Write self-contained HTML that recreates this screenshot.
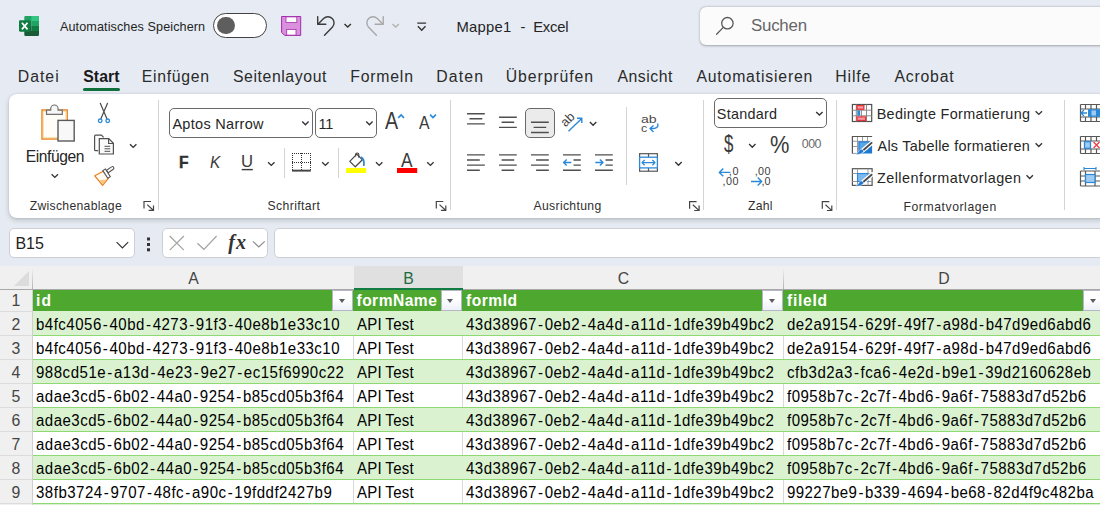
<!DOCTYPE html>
<html lang="de">
<head>
<meta charset="utf-8">
<title>Mappe1 - Excel</title>
<style>
html,body{margin:0;padding:0;}
body{width:1100px;height:505px;overflow:hidden;position:relative;background:#e6ebf3;font-family:"Liberation Sans",sans-serif;color:#242424;}
.abs{position:absolute;}
.t{position:absolute;white-space:nowrap;line-height:1;transform-origin:0 50%;}
#ico{position:absolute;left:0;top:0;overflow:hidden;}
#title{left:0;top:0;width:1100px;height:94px;background:linear-gradient(#e7ecf4,#e6eaf2);}
#search{left:699.5px;top:6.5px;width:420px;height:38.5px;background:#fbfbfc;border-radius:6px;box-shadow:0 0.5px 2.5px rgba(0,0,0,.30),0 0 1px rgba(0,0,0,.15);}
#toggle{left:213px;top:13px;width:54px;height:24.6px;border:1.2px solid #424242;border-radius:13px;background:#fff;box-sizing:border-box;}
#knob{left:217.2px;top:16.6px;width:17.6px;height:17.6px;border-radius:9px;background:#5e5e5e;}
#uline{left:83px;top:88px;width:37px;height:3px;border-radius:1.5px;background:#0f703b;}
#ribbon{left:9px;top:94px;width:1110px;height:124px;background:#fff;border-radius:8px;box-shadow:0 2px 5px rgba(0,0,0,.20),0 0 2px rgba(0,0,0,.10);}
.sep{position:absolute;width:1px;background:#d4d4d4;}
.combo{position:absolute;border:1px solid #6a6a6a;border-radius:5px;background:#fff;box-sizing:border-box;}
.fbox{position:absolute;background:#fff;border-radius:5px;border:1px solid #cdcfd4;box-sizing:border-box;}
#grid{left:0;top:266px;width:1100px;height:239px;background:#fff;}
#colhead{left:0;top:266px;width:1100px;height:23px;background:#f0f0f0;border-bottom:1px solid #a8a8a8;}
#rowhead{left:0;top:290px;width:32px;height:215px;background:#f0f0f0;border-right:1px solid #cfcfcf;}
.ch{position:absolute;top:266px;height:23px;line-height:26px;font-size:15.8px;color:#454545;text-align:center;}
.rh{position:absolute;left:0;width:32px;height:24px;line-height:24.6px;font-size:15.8px;color:#454545;text-align:center;}
.band{position:absolute;left:33px;width:1067px;}
.vl{position:absolute;width:1px;}
.fbtn{position:absolute;top:290px;width:21px;height:20.6px;background:linear-gradient(#fff 40%,#edf0f7);border:1px solid #b7b6c8;box-sizing:border-box;}
.fbtn:after{content:"";position:absolute;left:5.6px;top:8.1px;border-left:3.9px solid transparent;border-right:3.9px solid transparent;border-top:4.3px solid #5c5c5c;}
</style>
</head>
<body>
<div id="title" class="abs"></div>
<div id="toggle" class="abs"></div><div id="knob" class="abs"></div>
<div id="search" class="abs"></div>
<div id="uline" class="abs"></div>
<div id="ribbon" class="abs"></div>
<div class="sep" style="left:158px;top:100px;height:110px"></div>
<div class="sep" style="left:450px;top:100px;height:110px"></div>
<div class="sep" style="left:703px;top:100px;height:110px"></div>
<div class="sep" style="left:836px;top:100px;height:110px"></div>
<div class="sep" style="left:1064px;top:100px;height:110px"></div>
<div class="sep" style="left:284px;top:148px;height:30px"></div>
<div class="sep" style="left:338px;top:148px;height:30px"></div>
<div class="sep" style="left:626px;top:107px;height:78px"></div>
<div class="combo" style="left:169px;top:108px;width:144px;height:30px"></div>
<div class="combo" style="left:315px;top:108px;width:61.500px;height:30px"></div>
<div class="combo" style="left:714px;top:98px;width:113px;height:30px"></div>
<div class="combo" style="left:525px;top:108px;width:30px;height:30px;background:#ebebeb"></div>
<div class="fbox" style="left:9.200px;top:228px;width:126.300px;height:29.500px"></div>
<div class="fbox" style="left:161.500px;top:228px;width:106px;height:29.500px"></div>
<div class="fbox" style="left:273.500px;top:228px;width:840px;height:29.500px"></div>
<div id="grid" class="abs"></div>
<div id="colhead" class="abs"></div>
<div id="rowhead" class="abs"></div>
<div class="abs" style="left:353.5px;top:266px;width:109.5px;height:22px;background:#e0e0e0;border-bottom:2px solid #107c41"></div>
<div class="ch" style="left:33px;width:321px;color:#454545">A</div>
<div class="ch" style="left:354px;width:109px;color:#1e6c41">B</div>
<div class="ch" style="left:463px;width:321px;color:#454545">C</div>
<div class="ch" style="left:784px;width:320px;color:#454545">D</div>
<div class="vl" style="left:32px;top:267px;height:22px;background:linear-gradient(rgba(200,200,200,0) 5%,#b4b4b4)"></div>
<div class="vl" style="left:783px;top:267px;height:22px;background:linear-gradient(rgba(200,200,200,0) 5%,#b4b4b4)"></div>
<div class="band" style="top:290px;height:21px;background:#4ea72e"></div>
<div class="band" style="top:311px;height:25px;background:#daf2d0;border-bottom:1px solid #8ed973;box-sizing:border-box"></div>
<div class="band" style="top:336px;height:24px;background:#fff;border-bottom:1px solid #8ed973;box-sizing:border-box"></div>
<div class="band" style="top:360px;height:24px;background:#daf2d0;border-bottom:1px solid #8ed973;box-sizing:border-box"></div>
<div class="band" style="top:384px;height:24px;background:#fff;border-bottom:1px solid #8ed973;box-sizing:border-box"></div>
<div class="band" style="top:408px;height:24px;background:#daf2d0;border-bottom:1px solid #8ed973;box-sizing:border-box"></div>
<div class="band" style="top:432px;height:24px;background:#fff;border-bottom:1px solid #8ed973;box-sizing:border-box"></div>
<div class="band" style="top:456px;height:24px;background:#daf2d0;border-bottom:1px solid #8ed973;box-sizing:border-box"></div>
<div class="band" style="top:480px;height:24px;background:#fff;border-bottom:1px solid #8ed973;box-sizing:border-box"></div>
<div class="band" style="top:504px;height:2px;background:#daf2d0"></div>
<div class="vl" style="left:353px;top:336px;height:23px;background:#d9d9d9"></div>
<div class="vl" style="left:462px;top:336px;height:23px;background:#d9d9d9"></div>
<div class="vl" style="left:783px;top:336px;height:23px;background:#d9d9d9"></div>
<div class="vl" style="left:353px;top:384px;height:23px;background:#d9d9d9"></div>
<div class="vl" style="left:462px;top:384px;height:23px;background:#d9d9d9"></div>
<div class="vl" style="left:783px;top:384px;height:23px;background:#d9d9d9"></div>
<div class="vl" style="left:353px;top:432px;height:23px;background:#d9d9d9"></div>
<div class="vl" style="left:462px;top:432px;height:23px;background:#d9d9d9"></div>
<div class="vl" style="left:783px;top:432px;height:23px;background:#d9d9d9"></div>
<div class="vl" style="left:353px;top:480px;height:23px;background:#d9d9d9"></div>
<div class="vl" style="left:462px;top:480px;height:23px;background:#d9d9d9"></div>
<div class="vl" style="left:783px;top:480px;height:23px;background:#d9d9d9"></div>
<div class="rh" style="top:289px">1</div>
<div class="rh" style="top:313px">2</div>
<div class="abs" style="left:0;top:335px;width:32px;height:1px;background:#dcdcdc"></div>
<div class="rh" style="top:337px">3</div>
<div class="abs" style="left:0;top:359px;width:32px;height:1px;background:#dcdcdc"></div>
<div class="rh" style="top:361px">4</div>
<div class="abs" style="left:0;top:383px;width:32px;height:1px;background:#dcdcdc"></div>
<div class="rh" style="top:385px">5</div>
<div class="abs" style="left:0;top:407px;width:32px;height:1px;background:#dcdcdc"></div>
<div class="rh" style="top:409px">6</div>
<div class="abs" style="left:0;top:431px;width:32px;height:1px;background:#dcdcdc"></div>
<div class="rh" style="top:433px">7</div>
<div class="abs" style="left:0;top:455px;width:32px;height:1px;background:#dcdcdc"></div>
<div class="rh" style="top:457px">8</div>
<div class="abs" style="left:0;top:479px;width:32px;height:1px;background:#dcdcdc"></div>
<div class="rh" style="top:481px">9</div>
<div class="abs" style="left:0;top:503px;width:32px;height:1px;background:#dcdcdc"></div>
<div class="abs" style="left:0;top:311px;width:32px;height:1px;background:#dcdcdc"></div>
<div class="fbtn" style="left:332px"></div>
<div class="fbtn" style="left:440.5px"></div>
<div class="fbtn" style="left:762px"></div>
<div class="fbtn" style="left:1083px"></div>
<svg id="ico" width="1100" height="505" viewBox="0 0 1100 505" fill="none" stroke-linecap="butt">
<!-- excel logo -->
<g>
 <path d="M25.500 16h12.300a1.200 1.200 0 0 1 1.200 1.200V21H24.300v-3.800A1.200 1.200 0 0 1 25.500 16z" fill="#21a366"/>
 <rect x="31.600" y="16" width="7.400" height="5" fill="#33c481"/>
 <path d="M37.800 16a1.200 1.200 0 0 1 1.200 1.200V21h-7.400v-5z" fill="#33c481"/>
 <rect x="24.300" y="21" width="7.300" height="5" fill="#107c41"/>
 <rect x="31.600" y="21" width="7.400" height="5" fill="#21a366"/>
 <rect x="24.300" y="26" width="7.300" height="5" fill="#185c37"/>
 <rect x="31.600" y="26" width="7.400" height="5" fill="#107c41"/>
 <path d="M24.300 31H39v3.800a1.200 1.200 0 0 1-1.200 1.200H25.500a1.200 1.200 0 0 1-1.200-1.200z" fill="#185c37"/>
 <rect x="19" y="20.300" width="11.400" height="11.400" rx="1.100" fill="#107c41"/>
 <path d="M21.900 22.700l5.600 6.700M27.500 22.700l-5.600 6.700" stroke="#fff" stroke-width="1.700"/>
</g>
<!-- save -->
<path d="M281.600 16.500H300.700V35.400H284.600L281.600 32.400z" fill="#da90dc" stroke="#a32cae" stroke-width="1"/>
<rect x="286" y="16.900" width="10.800" height="5.700" fill="#fff" stroke="#a32cae" stroke-width="0.800"/>
<rect x="286.700" y="29.400" width="9.300" height="5.700" fill="#fff" stroke="#a32cae" stroke-width="0.800"/>
<!-- undo / redo -->
<g stroke="#3b3b3b" stroke-width="1.400" stroke-linecap="round" stroke-linejoin="round">
 <path d="M317.700 16.600V24.300H325.800"/>
 <path d="M318.200 23.900L323.600 18.600A6.100 6.100 0 0 1 332.300 27.200L324.500 35.300"/>
</g>
<g stroke="#a8a8a8" stroke-width="1.400" stroke-linecap="round" stroke-linejoin="round">
 <path d="M383.200 16.600V24.300H375.100"/>
 <path d="M382.700 23.900L377.300 18.600A6.100 6.100 0 0 0 368.600 27.200L376.400 35.300"/>
</g>
<path d="M0.3 0.4l3.2 3.2 3.2-3.200" transform="translate(344.200 23.500)" stroke-width="1.35" fill="none" stroke="#333"/>
<path d="M0.3 0.4l3.2 3.2 3.2-3.200" transform="translate(392.200 23.500)" stroke-width="1.35" fill="none" stroke="#b4b4b4"/>
<path d="M417.300 23.100H426.100M417.900 26.300l3.800 3.900 3.800-3.900" stroke="#333" stroke-width="1.400"/>
<!-- search -->
<g stroke="#5a5a5a" stroke-width="1.300"><circle cx="727.400" cy="23.200" r="5.700"/><path d="M723.300 27.400L716.600 34.300" stroke-linecap="round"/></g>

<!-- paste clipboard -->
<rect x="42" y="110" width="25.200" height="29" fill="#fffdf8" stroke="#e8862a" stroke-width="1.500"/>
<rect x="43.300" y="111.300" width="22.600" height="26.400" fill="none" stroke="#fbdc9b" stroke-width="1"/>
<path d="M46.500 114.300V110.100H50.700V108.700A3.700 3.700 0 0 1 58.100 108.700V110.100H62.300V114.300z" fill="#f6f6f6" stroke="#707070" stroke-width="1.200"/>
<rect x="58" y="120.400" width="16.200" height="20.600" fill="#f8f8f8" stroke="#5a5a5a" stroke-width="1.400"/>
<!-- scissors -->
<g stroke="#4a4a4a" stroke-width="1.200" stroke-linecap="round"><path d="M100.300 103.300L106.800 118.600M107.500 103.300L101 118.600"/></g>
<g stroke="#2b88d8" stroke-width="1.300" fill="#fff"><circle cx="100.200" cy="120.800" r="1.800"/><circle cx="107.700" cy="120.800" r="1.800"/></g>
<!-- copy -->
<g stroke="#505050" stroke-width="1.200" fill="none">
 <path d="M98.200 150.700H95.600Q94.600 150.700 94.600 149.700V136.200Q94.600 135.200 95.600 135.200H101.500L103.600 137.400"/>
 <path d="M99.300 138.700H108.800L113.400 143.300V154H99.300z" fill="#fafafa"/>
 <path d="M108.600 138.900V143.500H113.200"/>
 <path d="M104.500 146.300H110.200M104.500 148.800H110.200M104.500 151.300H110.200" stroke-width="1"/>
</g>
<path d="M0.3 0.4l3.2 3.2 3.2-3.200" transform="translate(129.700 143.800)" stroke-width="1.35" fill="none" stroke="#333"/>
<path d="M0.3 0.4l3.2 3.2 3.2-3.200" transform="translate(51.300 173.800)" stroke-width="1.35" fill="none" stroke="#333"/>
<!-- format painter -->
<path d="M94.800 175.800L103.700 171L108.300 178.300L102.600 185.300z" fill="#fffaf2" stroke="#e8811d" stroke-width="1.300" stroke-linejoin="round"/>
<path d="M99.500 180.300L102.800 184.500L106.800 179.500z" fill="#f9c57f" stroke="none"/>
<path d="M102.800 170.600L105.400 169L110.300 176.600L107.800 178.300z" fill="#fff" stroke="#555" stroke-width="1.100"/>
<path d="M106.600 170.300L111.600 166.900A1.300 1.300 0 0 1 113.300 169.200L108.300 172.800z" fill="#fff" stroke="#555" stroke-width="1.100"/>
<g transform="translate(144 201)" stroke="#444" stroke-width="1.2" fill="none"><path d="M0 7.5V0.5H7"/><path d="M3.2 3.6L9.3 9.2M9.5 4.400V9.3H4.6"/></g>
<g transform="translate(436.300 201)" stroke="#444" stroke-width="1.2" fill="none"><path d="M0 7.5V0.5H7"/><path d="M3.2 3.6L9.3 9.2M9.5 4.400V9.3H4.6"/></g>
<g transform="translate(689.600 201.200)" stroke="#444" stroke-width="1.2" fill="none"><path d="M0 7.5V0.5H7"/><path d="M3.2 3.6L9.3 9.2M9.5 4.400V9.3H4.6"/></g>
<g transform="translate(822.300 201.200)" stroke="#444" stroke-width="1.2" fill="none"><path d="M0 7.5V0.5H7"/><path d="M3.2 3.6L9.3 9.2M9.5 4.400V9.3H4.6"/></g>

<!-- font group -->
<path d="M0.3 0.4l3.2 3.2 3.2-3.200" transform="translate(301.900 121.200)" stroke-width="1.35" fill="none" stroke="#333"/>
<path d="M0.3 0.4l3.2 3.2 3.2-3.200" transform="translate(365.900 121.200)" stroke-width="1.35" fill="none" stroke="#333"/>
<path d="M398.200 117.900l2.900-3 2.900 3" stroke="#2b88d8" stroke-width="1.600"/>
<path d="M430.100 114.600l2.900 3 2.900-3" stroke="#2b88d8" stroke-width="1.600"/>
<rect x="241.700" y="168.900" width="11.100" height="1.400" fill="#3a3a3a"/>
<path d="M0.3 0.4l3.2 3.2 3.2-3.200" transform="translate(267.800 161.800)" stroke-width="1.35" fill="none" stroke="#333"/>
<!-- borders icon -->
<g stroke="#333" stroke-width="1" stroke-dasharray="1 1" shape-rendering="crispEdges">
 <path d="M292 153.500H311M292 162.500H311M292.500 153V170M301.500 153V170M310.500 153V170"/>
</g>
<rect x="292" y="169.700" width="18.800" height="1.900" fill="#444"/>
<path d="M0.3 0.4l3.2 3.2 3.2-3.200" transform="translate(321.900 161.800)" stroke-width="1.35" fill="none" stroke="#333"/>
<!-- fill bucket -->
<rect x="346" y="168" width="20.200" height="5" fill="#ffff00"/>
<path d="M349.800 161.300L356.800 154.200L362.400 159.800L355.300 166.800z" stroke="#444" stroke-width="1.200" stroke-linejoin="round" fill="#fff"/>
<path d="M355.600 156.500V154.600A1.600 1.600 0 0 1 358.800 154.600V157.800" stroke="#444" stroke-width="1.100"/>
<path d="M361.300 157.400C363.600 158.400 364.200 161.500 363.900 165.200" stroke="#2b88d8" stroke-width="1.800" stroke-linecap="round"/>
<path d="M0.3 0.4l3.2 3.2 3.2-3.200" transform="translate(375.700 161.800)" stroke-width="1.35" fill="none" stroke="#333"/>
<rect x="397" y="168" width="20.200" height="5" fill="#ff0000"/>
<path d="M0.3 0.4l3.2 3.2 3.2-3.200" transform="translate(426.900 161.800)" stroke-width="1.35" fill="none" stroke="#333"/>

<!-- alignment -->
<g stroke="#4f4f4f" stroke-width="1.400">
 <path d="M467 113.700H484.800M469.500 118.800H482.300M467 123.900H484.800"/>
 <path d="M499 117.200H516.800M501.600 122.300H514.200M499 127.400H516.800"/>
 <path d="M531 122.300H548.800M533.600 127.400H546.200M531 132.500H548.800"/>
 <path d="M467 154.900H484.800M467 160H479.800M467 165.100H484.800M467 170.200H479.800"/>
 <path d="M499 154.900H516.800M501.600 160H514.200M499 165.100H516.800M501.600 170.200H514.200"/>
 <path d="M531 154.900H548.800M536.100 160H548.800M531 165.100H548.800M536.100 170.200H548.800"/>
 <path d="M563 154.900H580.800M573.500 160H580.800M573.500 165.100H580.800M563 170.200H580.800"/>
 <path d="M595 154.900H612.800M605.500 160H612.800M605.500 165.100H612.800M595 170.200H612.800"/>
</g>
<g stroke="#2b88d8" stroke-width="1.400" stroke-linejoin="round">
 <path d="M563.600 162.500H571.300M566.700 159.400L563.600 162.500L566.700 165.600"/>
 <path d="M595.300 162.500H603M599.900 159.400L603 162.500L599.900 165.600"/>
 <path d="M568.500 131.300L581.700 118.400M577 118.300H581.800V122.900"/>
</g>
<path d="M0.3 0.4l3.2 3.2 3.2-3.200" transform="translate(589.600 121.700)" stroke-width="1.35" fill="none" stroke="#333"/>
<!-- wrap text arrow -->
<path d="M657.600 123.500C658.800 126.500 657.300 128.700 650.300 128.600M653.500 125.400L650 128.600L653.500 131.900" stroke="#2b88d8" stroke-width="1.400" stroke-linejoin="round"/>
<!-- merge -->
<g stroke="#585858" stroke-width="1.200"><rect x="639.600" y="153.700" width="17.800" height="17.500"/><path d="M648.500 153.700V157M648.500 168V171.200"/></g>
<rect x="639.600" y="157.200" width="17.800" height="10.700" fill="#fff" stroke="#2b88d8" stroke-width="1.300"/>
<path d="M642 162.600H655M644.600 160L642 162.600L644.600 165.200M652.400 160L655 162.600L652.400 165.200" stroke="#2b88d8" stroke-width="1.300" stroke-linejoin="round"/>
<path d="M0.3 0.4l3.2 3.2 3.2-3.200" transform="translate(675 161.700)" stroke-width="1.35" fill="none" stroke="#333"/>

<!-- number -->
<path d="M0.3 0.4l3.2 3.2 3.2-3.200" transform="translate(815.900 111.500)" stroke-width="1.35" fill="none" stroke="#333"/>
<path d="M0.3 0.4l3.2 3.2 3.2-3.200" transform="translate(748.800 143.600)" stroke-width="1.35" fill="none" stroke="#333"/>
<g stroke="#2b88d8" stroke-width="1.400" stroke-linejoin="round">
 <path d="M719.300 172.400H730.300M723.300 168.500L719.300 172.400L723.300 176.300"/>
 <path d="M751 181.500H761.700M757.700 177.600L761.700 181.500L757.700 185.400"/>
</g>

<!-- styles icons -->
<g>
 <rect x="852.400" y="104.500" width="19.300" height="17" fill="#fff" stroke="#505050" stroke-width="1.200"/>
 <path d="M856.300 104.500V121.500M861.400 104.500V121.500M866.500 104.500V121.500M852.400 110.200H871.600M852.400 115.800H871.600" stroke="#8a8a8a" stroke-width="1"/>
 <rect x="856.300" y="105" width="8.200" height="4.900" fill="#e8323c"/>
 <rect x="857.300" y="110.400" width="2.800" height="5.200" fill="#2b88d8"/>
 <rect x="856.300" y="116.300" width="10" height="4.700" fill="#e8323c"/>
 <rect x="857.600" y="106.200" width="5.600" height="2.400" fill="#f59aa0"/>
 <rect x="857.600" y="117.500" width="7.400" height="2.300" fill="#f59aa0"/>
</g>
<g>
 <path d="M857.500 136.500V153.500M862.500 136.500V141.500M867.500 136.500V141.500M852.400 141.300H871.500M852.400 146.500H858M852.400 153.400H858" stroke="#9a9a9a" stroke-width="1"/>
 <path d="M852.400 153.500V136.500H872.100" stroke="#555" stroke-width="1.200"/>
 <rect x="858.300" y="141.300" width="13.800" height="12.200" fill="#2079d0"/>
 <rect x="859.500" y="142.500" width="8.500" height="7.500" fill="#5aa5e6"/>
 <path d="M863.200 150.200L872 142.600" stroke="#fff" stroke-width="4.400" stroke-linecap="round"/>
 <path d="M863.800 149.700L871.600 142.900" stroke="#4a4a4a" stroke-width="1.900" stroke-linecap="round"/>
 <path d="M855.600 154.400C858.500 155 862.300 153.800 863.900 151C863.200 149 860.400 148.700 859.200 150.500C858.500 152.200 857.300 153.500 855.600 154.400z" fill="#2079d0" stroke="#fff" stroke-width="0.500"/>
</g>
<g>
 <rect x="852.400" y="168.700" width="19.700" height="16.700" fill="#fff" stroke="#555" stroke-width="1.200"/>
 <path d="M857.500 168.700V185.400M852.400 173.500H872M868 168.700V185.400M852.400 181.500H872" stroke="#9a9a9a" stroke-width="1"/>
 <rect x="857.500" y="173.500" width="10.500" height="8" fill="#7ab8ee" stroke="#2b88d8" stroke-width="1.100"/>
 <path d="M863.200 182L872 174.400" stroke="#fff" stroke-width="4.400" stroke-linecap="round"/>
 <path d="M863.800 181.500L871.600 174.700" stroke="#4a4a4a" stroke-width="1.900" stroke-linecap="round"/>
 <path d="M855.600 186.200C858.500 186.800 862.300 185.600 863.900 182.800C863.200 180.800 860.400 180.500 859.200 182.300C858.500 184 857.300 185.300 855.600 186.200z" fill="#2079d0" stroke="#fff" stroke-width="0.500"/>
</g>
<path d="M0.3 0.4l3.2 3.2 3.2-3.200" transform="translate(1035.300 110.800)" stroke-width="1.35" fill="none" stroke="#333"/>
<path d="M0.3 0.4l3.2 3.2 3.2-3.200" transform="translate(1035.300 142.900)" stroke-width="1.35" fill="none" stroke="#333"/>
<path d="M0.3 0.4l3.2 3.2 3.2-3.200" transform="translate(1026.200 174.900)" stroke-width="1.35" fill="none" stroke="#333"/>
<!-- cells icons (cut) -->
<g stroke="#585858" stroke-width="1.200">
 <path d="M1080.500 104.500H1100M1080.500 109H1100M1080.500 117H1100M1080.500 121.500H1100M1080.500 104.500V121.500M1085.500 104.500V109M1085.500 117V121.500M1091 104.500V121.500M1096.500 104.500V121.500"/>
 <path d="M1080.500 136.500H1100M1080.500 141H1100M1080.500 149H1100M1080.500 153.500H1100M1080.500 136.500V153.500M1085.500 136.500V141M1085.500 149V153.500M1091 136.500V141M1091 149V153.500M1096.500 136.500V141M1096.500 149V153.500"/>
 <path d="M1080.500 171H1100M1080.500 176H1100M1080.500 181H1100M1080.500 186H1100M1080.500 171V186M1085.500 171V186M1095 171V186"/>
</g>
<rect x="1088" y="109.200" width="12" height="7.600" fill="#2b88d8"/><rect x="1091.500" y="110.500" width="4.500" height="5" fill="#9fcbf0"/>
<path d="M1087 113H1081M1084 110L1081 113L1084 116" stroke="#2b88d8" stroke-width="1.300"/>
<rect x="1084.500" y="141.700" width="6" height="6.600" fill="#9fcbf0" stroke="#2b88d8" stroke-width="1.300"/>
<path d="M1093.500 142L1099.500 148M1099.500 142L1093.500 148" stroke="#ee3d46" stroke-width="1.300"/>
<rect x="1085.500" y="174.500" width="9.500" height="8" fill="#9fcbf0" stroke="#2b88d8" stroke-width="1.200"/>
<path d="M1084 168.500H1096M1084 167V170M1096 167V170" stroke="#2b88d8" stroke-width="1.100"/>

<!-- formula bar -->
<path d="M116.600 242.100L122.400 247.900L128.200 242.100" stroke="#333" stroke-width="1.200"/>
<g fill="#333"><rect x="147" y="237.500" width="3" height="3"/><rect x="147" y="243" width="3" height="3"/><rect x="147" y="248.300" width="3" height="3"/></g>
<path d="M169.700 236L183.900 250.200M183.900 236L169.700 250.200" stroke="#a3a3a3" stroke-width="1.200"/>
<path d="M197.400 243.200L203.900 249.300L216.600 236" stroke="#a3a3a3" stroke-width="1.200"/>
<path d="M252.900 241.400L258.800 246.900L264.700 241.400" stroke="#8c8c8c" stroke-width="1.200"/>
<!-- select all triangle -->
<path d="M29 271V286H14z" fill="#dcdcdc"/>
</svg>

<div class="t" style="left:60.00px;top:21.01px;font-size:12.6px;color:#242424;letter-spacing:0.104px;">Automatisches Speichern</div>
<div class="t" style="left:456.42px;top:20.00px;font-size:14.8px;color:#242424;letter-spacing:0.277px;">Mappe1</div>
<div class="t" style="left:520.41px;top:20.00px;font-size:14.8px;color:#242424;">-</div>
<div class="t" style="left:533.22px;top:20.00px;font-size:14.8px;color:#242424;letter-spacing:-0.222px;">Excel</div>
<div class="t" style="left:750.94px;top:18.01px;font-size:16.9px;color:#666;letter-spacing:-0.225px;">Suchen</div>
<div class="t" style="left:17.74px;top:69.01px;font-size:15.8px;color:#2a2a2a;letter-spacing:1.010px;">Datei</div>
<div class="t" style="left:83.20px;top:69.01px;font-size:15.8px;color:#1a1a1a;font-weight:bold;letter-spacing:0.081px;">Start</div>
<div class="t" style="left:141.74px;top:69.01px;font-size:15.8px;color:#2a2a2a;letter-spacing:0.694px;">Einfügen</div>
<div class="t" style="left:232.89px;top:69.01px;font-size:15.8px;color:#2a2a2a;letter-spacing:0.599px;">Seitenlayout</div>
<div class="t" style="left:350.34px;top:69.01px;font-size:15.8px;color:#2a2a2a;letter-spacing:0.781px;">Formeln</div>
<div class="t" style="left:436.34px;top:69.01px;font-size:15.8px;color:#2a2a2a;letter-spacing:1.117px;">Daten</div>
<div class="t" style="left:505.81px;top:69.01px;font-size:15.8px;color:#2a2a2a;letter-spacing:0.901px;">Überprüfen</div>
<div class="t" style="left:617.40px;top:69.01px;font-size:15.8px;color:#2a2a2a;letter-spacing:0.539px;">Ansicht</div>
<div class="t" style="left:696.40px;top:69.01px;font-size:15.8px;color:#2a2a2a;letter-spacing:0.814px;">Automatisieren</div>
<div class="t" style="left:835.34px;top:69.01px;font-size:15.8px;color:#2a2a2a;letter-spacing:0.827px;">Hilfe</div>
<div class="t" style="left:894.40px;top:69.01px;font-size:15.8px;color:#2a2a2a;letter-spacing:0.799px;">Acrobat</div>
<div class="t" style="left:25.75px;top:149.02px;font-size:15.6px;color:#262626;letter-spacing:-0.412px;">Einfügen</div>
<div class="t" style="left:29.63px;top:200.01px;font-size:12.2px;color:#303030;letter-spacing:0.308px;">Zwischenablage</div>
<div class="t" style="left:267.55px;top:200.01px;font-size:12.2px;color:#303030;letter-spacing:0.397px;">Schriftart</div>
<div class="t" style="left:533.50px;top:200.00px;font-size:12.2px;color:#303030;letter-spacing:0.332px;">Ausrichtung</div>
<div class="t" style="left:748.03px;top:200.01px;font-size:12.2px;color:#303030;letter-spacing:0.231px;">Zahl</div>
<div class="t" style="left:903.42px;top:201.00px;font-size:12.2px;color:#303030;letter-spacing:0.576px;">Formatvorlagen</div>
<div class="t" style="left:172.40px;top:117.00px;font-size:14.5px;color:#262626;letter-spacing:0.302px;">Aptos Narrow</div>
<div class="t" style="left:318.51px;top:117.00px;font-size:14.5px;color:#262626;letter-spacing:-0.196px;">11</div>
<div class="t" style="left:716.85px;top:107.00px;font-size:14.4px;color:#262626;letter-spacing:0.241px;">Standard</div>
<div class="t" style="left:876.65px;top:107.00px;font-size:14.4px;color:#262626;letter-spacing:0.348px;">Bedingte Formatierung</div>
<div class="t" style="left:877.50px;top:139.00px;font-size:14.4px;color:#262626;letter-spacing:0.278px;">Als Tabelle formatieren</div>
<div class="t" style="left:876.97px;top:171.00px;font-size:14.4px;color:#262626;letter-spacing:0.471px;">Zellenformatvorlagen</div>
<div class="t" style="left:178.58px;top:154.01px;font-size:16.4px;color:#303030;font-weight:bold;transform:scaleX(0.9565);-webkit-text-stroke:0.4px #303030;">F</div>
<div class="t" style="left:210.14px;top:154.01px;font-size:16.4px;color:#3a3a3a;font-style:italic;transform:scaleX(0.9395);">K</div>
<div class="t" style="left:241.25px;top:154.01px;font-size:16.6px;color:#3a3a3a;transform:scaleX(1.0040);">U</div>
<div class="t" style="left:723.53px;top:133.01px;font-size:23px;color:#3a3a3a;transform:scaleX(0.7314);">$</div>
<div class="t" style="left:770.04px;top:134.00px;font-size:23px;color:#3a3a3a;transform:scaleX(0.9491);">%</div>
<div class="t" style="left:801.87px;top:138.00px;font-size:12.4px;color:#6a6a6a;letter-spacing:-0.553px;">000</div>
<div class="t" style="left:728.68px;top:166.00px;font-size:10.8px;color:#3c3c3c;letter-spacing:0.801px;">,0</div>
<div class="t" style="left:722.38px;top:176.01px;font-size:10.8px;color:#3c3c3c;letter-spacing:0.547px;">,00</div>
<div class="t" style="left:754.78px;top:166.00px;font-size:10.8px;color:#3c3c3c;letter-spacing:0.347px;">,00</div>
<div class="t" style="left:761.38px;top:176.01px;font-size:10.8px;color:#3c3c3c;letter-spacing:0.101px;">,0</div>
<div class="t" style="left:641.34px;top:114.01px;font-size:11.8px;color:#4a4a4a;transform:scaleX(1.1917);">ab</div>
<div class="t" style="left:641.40px;top:123.01px;font-size:11.8px;color:#4a4a4a;transform:scaleX(1.0520);">c</div>
<div class="t" style="left:385.40px;top:110.01px;font-size:23.2px;color:#3a3a3a;transform:scaleX(0.8492);">A</div>
<div class="t" style="left:419.30px;top:115.00px;font-size:17.6px;color:#3a3a3a;transform:scaleX(0.8989);">A</div>
<div class="t" style="left:401.40px;top:151.01px;font-size:19.8px;color:#3a3a3a;transform:scaleX(0.8744);">A</div>
<div class="t" style="left:15.42px;top:236.00px;font-size:16px;color:#222;letter-spacing:0.035px;">B15</div>
<div class="t" style="left:228.30px;top:232.01px;font-size:20px;color:#333;font-weight:bold;font-style:italic;font-family:'Liberation Serif',serif;letter-spacing:0.940px;">fx</div>
<div class="t" style="left:35.89px;top:293.02px;font-size:15.6px;color:#fff;font-weight:bold;letter-spacing:1.278px;">id</div>
<div class="t" style="left:356.47px;top:293.02px;font-size:15.6px;color:#fff;font-weight:bold;letter-spacing:0.466px;">formName</div>
<div class="t" style="left:466.07px;top:293.02px;font-size:15.6px;color:#fff;font-weight:bold;letter-spacing:0.486px;">formId</div>
<div class="t" style="left:787.07px;top:293.02px;font-size:15.6px;color:#fff;font-weight:bold;letter-spacing:0.712px;">fileId</div>
<div class="t" style="left:36.10px;top:317.00px;font-size:15.8px;color:#000;letter-spacing:0.524px;transform:scaleX(0.95);">b4fc4056<span style="margin:0 1.20px">-</span>40bd<span style="margin:0 1.20px">-</span>4273<span style="margin:0 1.20px">-</span>91f3<span style="margin:0 1.20px">-</span>40e8b1e33c10</div>
<div class="t" style="left:357.00px;top:317.00px;font-size:15.8px;color:#000;letter-spacing:0.316px;transform:scaleX(0.95);word-spacing:-1px;">API Test</div>
<div class="t" style="left:466.10px;top:317.00px;font-size:15.8px;color:#000;letter-spacing:0.538px;transform:scaleX(0.95);">43d38967<span style="margin:0 1.20px">-</span>0eb2<span style="margin:0 1.20px">-</span>4a4d<span style="margin:0 1.20px">-</span>a11d<span style="margin:0 1.20px">-</span>1dfe39b49bc2</div>
<div class="t" style="left:787.00px;top:317.00px;font-size:15.8px;color:#000;letter-spacing:0.485px;transform:scaleX(0.95);">de2a9154<span style="margin:0 1.20px">-</span>629f<span style="margin:0 1.20px">-</span>49f7<span style="margin:0 1.20px">-</span>a98d<span style="margin:0 1.20px">-</span>b47d9ed6abd6</div>
<div class="t" style="left:36.10px;top:341.00px;font-size:15.8px;color:#000;letter-spacing:0.524px;transform:scaleX(0.95);">b4fc4056<span style="margin:0 1.20px">-</span>40bd<span style="margin:0 1.20px">-</span>4273<span style="margin:0 1.20px">-</span>91f3<span style="margin:0 1.20px">-</span>40e8b1e33c10</div>
<div class="t" style="left:357.00px;top:341.00px;font-size:15.8px;color:#000;letter-spacing:0.316px;transform:scaleX(0.95);word-spacing:-1px;">API Test</div>
<div class="t" style="left:466.10px;top:341.00px;font-size:15.8px;color:#000;letter-spacing:0.538px;transform:scaleX(0.95);">43d38967<span style="margin:0 1.20px">-</span>0eb2<span style="margin:0 1.20px">-</span>4a4d<span style="margin:0 1.20px">-</span>a11d<span style="margin:0 1.20px">-</span>1dfe39b49bc2</div>
<div class="t" style="left:787.00px;top:341.00px;font-size:15.8px;color:#000;letter-spacing:0.485px;transform:scaleX(0.95);">de2a9154<span style="margin:0 1.20px">-</span>629f<span style="margin:0 1.20px">-</span>49f7<span style="margin:0 1.20px">-</span>a98d<span style="margin:0 1.20px">-</span>b47d9ed6abd6</div>
<div class="t" style="left:36.32px;top:365.00px;font-size:15.8px;color:#000;letter-spacing:0.554px;transform:scaleX(0.95);">988cd51e<span style="margin:0 1.20px">-</span>a13d<span style="margin:0 1.20px">-</span>4e23<span style="margin:0 1.20px">-</span>9e27<span style="margin:0 1.20px">-</span>ec15f6990c22</div>
<div class="t" style="left:357.00px;top:365.00px;font-size:15.8px;color:#000;letter-spacing:0.316px;transform:scaleX(0.95);word-spacing:-1px;">API Test</div>
<div class="t" style="left:466.10px;top:365.00px;font-size:15.8px;color:#000;letter-spacing:0.538px;transform:scaleX(0.95);">43d38967<span style="margin:0 1.20px">-</span>0eb2<span style="margin:0 1.20px">-</span>4a4d<span style="margin:0 1.20px">-</span>a11d<span style="margin:0 1.20px">-</span>1dfe39b49bc2</div>
<div class="t" style="left:787.00px;top:365.00px;font-size:15.8px;color:#000;letter-spacing:0.536px;transform:scaleX(0.95);">cfb3d2a3<span style="margin:0 1.20px">-</span>fca6<span style="margin:0 1.20px">-</span>4e2d<span style="margin:0 1.20px">-</span>b9e1<span style="margin:0 1.20px">-</span>39d2160628eb</div>
<div class="t" style="left:36.40px;top:389.00px;font-size:15.8px;color:#000;letter-spacing:0.518px;transform:scaleX(0.95);">adae3cd5<span style="margin:0 1.20px">-</span>6b02<span style="margin:0 1.20px">-</span>44a0<span style="margin:0 1.20px">-</span>9254<span style="margin:0 1.20px">-</span>b85cd05b3f64</div>
<div class="t" style="left:357.00px;top:389.00px;font-size:15.8px;color:#000;letter-spacing:0.316px;transform:scaleX(0.95);word-spacing:-1px;">API Test</div>
<div class="t" style="left:466.10px;top:389.00px;font-size:15.8px;color:#000;letter-spacing:0.538px;transform:scaleX(0.95);">43d38967<span style="margin:0 1.20px">-</span>0eb2<span style="margin:0 1.20px">-</span>4a4d<span style="margin:0 1.20px">-</span>a11d<span style="margin:0 1.20px">-</span>1dfe39b49bc2</div>
<div class="t" style="left:787.45px;top:389.00px;font-size:15.8px;color:#000;letter-spacing:0.516px;transform:scaleX(0.95);">f0958b7c<span style="margin:0 1.20px">-</span>2c7f<span style="margin:0 1.20px">-</span>4bd6<span style="margin:0 1.20px">-</span>9a6f<span style="margin:0 1.20px">-</span>75883d7d52b6</div>
<div class="t" style="left:36.40px;top:413.00px;font-size:15.8px;color:#000;letter-spacing:0.518px;transform:scaleX(0.95);">adae3cd5<span style="margin:0 1.20px">-</span>6b02<span style="margin:0 1.20px">-</span>44a0<span style="margin:0 1.20px">-</span>9254<span style="margin:0 1.20px">-</span>b85cd05b3f64</div>
<div class="t" style="left:357.00px;top:413.00px;font-size:15.8px;color:#000;letter-spacing:0.316px;transform:scaleX(0.95);word-spacing:-1px;">API Test</div>
<div class="t" style="left:466.10px;top:413.00px;font-size:15.8px;color:#000;letter-spacing:0.538px;transform:scaleX(0.95);">43d38967<span style="margin:0 1.20px">-</span>0eb2<span style="margin:0 1.20px">-</span>4a4d<span style="margin:0 1.20px">-</span>a11d<span style="margin:0 1.20px">-</span>1dfe39b49bc2</div>
<div class="t" style="left:787.45px;top:413.00px;font-size:15.8px;color:#000;letter-spacing:0.516px;transform:scaleX(0.95);">f0958b7c<span style="margin:0 1.20px">-</span>2c7f<span style="margin:0 1.20px">-</span>4bd6<span style="margin:0 1.20px">-</span>9a6f<span style="margin:0 1.20px">-</span>75883d7d52b6</div>
<div class="t" style="left:36.40px;top:437.00px;font-size:15.8px;color:#000;letter-spacing:0.518px;transform:scaleX(0.95);">adae3cd5<span style="margin:0 1.20px">-</span>6b02<span style="margin:0 1.20px">-</span>44a0<span style="margin:0 1.20px">-</span>9254<span style="margin:0 1.20px">-</span>b85cd05b3f64</div>
<div class="t" style="left:357.00px;top:437.00px;font-size:15.8px;color:#000;letter-spacing:0.316px;transform:scaleX(0.95);word-spacing:-1px;">API Test</div>
<div class="t" style="left:466.10px;top:437.00px;font-size:15.8px;color:#000;letter-spacing:0.538px;transform:scaleX(0.95);">43d38967<span style="margin:0 1.20px">-</span>0eb2<span style="margin:0 1.20px">-</span>4a4d<span style="margin:0 1.20px">-</span>a11d<span style="margin:0 1.20px">-</span>1dfe39b49bc2</div>
<div class="t" style="left:787.45px;top:437.00px;font-size:15.8px;color:#000;letter-spacing:0.516px;transform:scaleX(0.95);">f0958b7c<span style="margin:0 1.20px">-</span>2c7f<span style="margin:0 1.20px">-</span>4bd6<span style="margin:0 1.20px">-</span>9a6f<span style="margin:0 1.20px">-</span>75883d7d52b6</div>
<div class="t" style="left:36.40px;top:461.00px;font-size:15.8px;color:#000;letter-spacing:0.518px;transform:scaleX(0.95);">adae3cd5<span style="margin:0 1.20px">-</span>6b02<span style="margin:0 1.20px">-</span>44a0<span style="margin:0 1.20px">-</span>9254<span style="margin:0 1.20px">-</span>b85cd05b3f64</div>
<div class="t" style="left:357.00px;top:461.00px;font-size:15.8px;color:#000;letter-spacing:0.316px;transform:scaleX(0.95);word-spacing:-1px;">API Test</div>
<div class="t" style="left:466.10px;top:461.00px;font-size:15.8px;color:#000;letter-spacing:0.538px;transform:scaleX(0.95);">43d38967<span style="margin:0 1.20px">-</span>0eb2<span style="margin:0 1.20px">-</span>4a4d<span style="margin:0 1.20px">-</span>a11d<span style="margin:0 1.20px">-</span>1dfe39b49bc2</div>
<div class="t" style="left:787.45px;top:461.00px;font-size:15.8px;color:#000;letter-spacing:0.516px;transform:scaleX(0.95);">f0958b7c<span style="margin:0 1.20px">-</span>2c7f<span style="margin:0 1.20px">-</span>4bd6<span style="margin:0 1.20px">-</span>9a6f<span style="margin:0 1.20px">-</span>75883d7d52b6</div>
<div class="t" style="left:36.47px;top:485.00px;font-size:15.8px;color:#000;letter-spacing:0.540px;transform:scaleX(0.95);">38fb3724<span style="margin:0 1.20px">-</span>9707<span style="margin:0 1.20px">-</span>48fc<span style="margin:0 1.20px">-</span>a90c<span style="margin:0 1.20px">-</span>19fddf2427b9</div>
<div class="t" style="left:357.00px;top:485.00px;font-size:15.8px;color:#000;letter-spacing:0.316px;transform:scaleX(0.95);word-spacing:-1px;">API Test</div>
<div class="t" style="left:466.10px;top:485.00px;font-size:15.8px;color:#000;letter-spacing:0.538px;transform:scaleX(0.95);">43d38967<span style="margin:0 1.20px">-</span>0eb2<span style="margin:0 1.20px">-</span>4a4d<span style="margin:0 1.20px">-</span>a11d<span style="margin:0 1.20px">-</span>1dfe39b49bc2</div>
<div class="t" style="left:786.92px;top:485.00px;font-size:15.8px;color:#000;letter-spacing:0.463px;transform:scaleX(0.95);">99227be9<span style="margin:0 1.20px">-</span>b339<span style="margin:0 1.20px">-</span>4694<span style="margin:0 1.20px">-</span>be68<span style="margin:0 1.20px">-</span>82d4f9c482ba</div>
<div class="t" style="left:568.2px;top:119.8px;font-size:12.8px;color:#3f3f3f;transform-origin:0 0;transform:rotate(-45deg) translate(-50%,-50%)">ab</div>

</body>
</html>
